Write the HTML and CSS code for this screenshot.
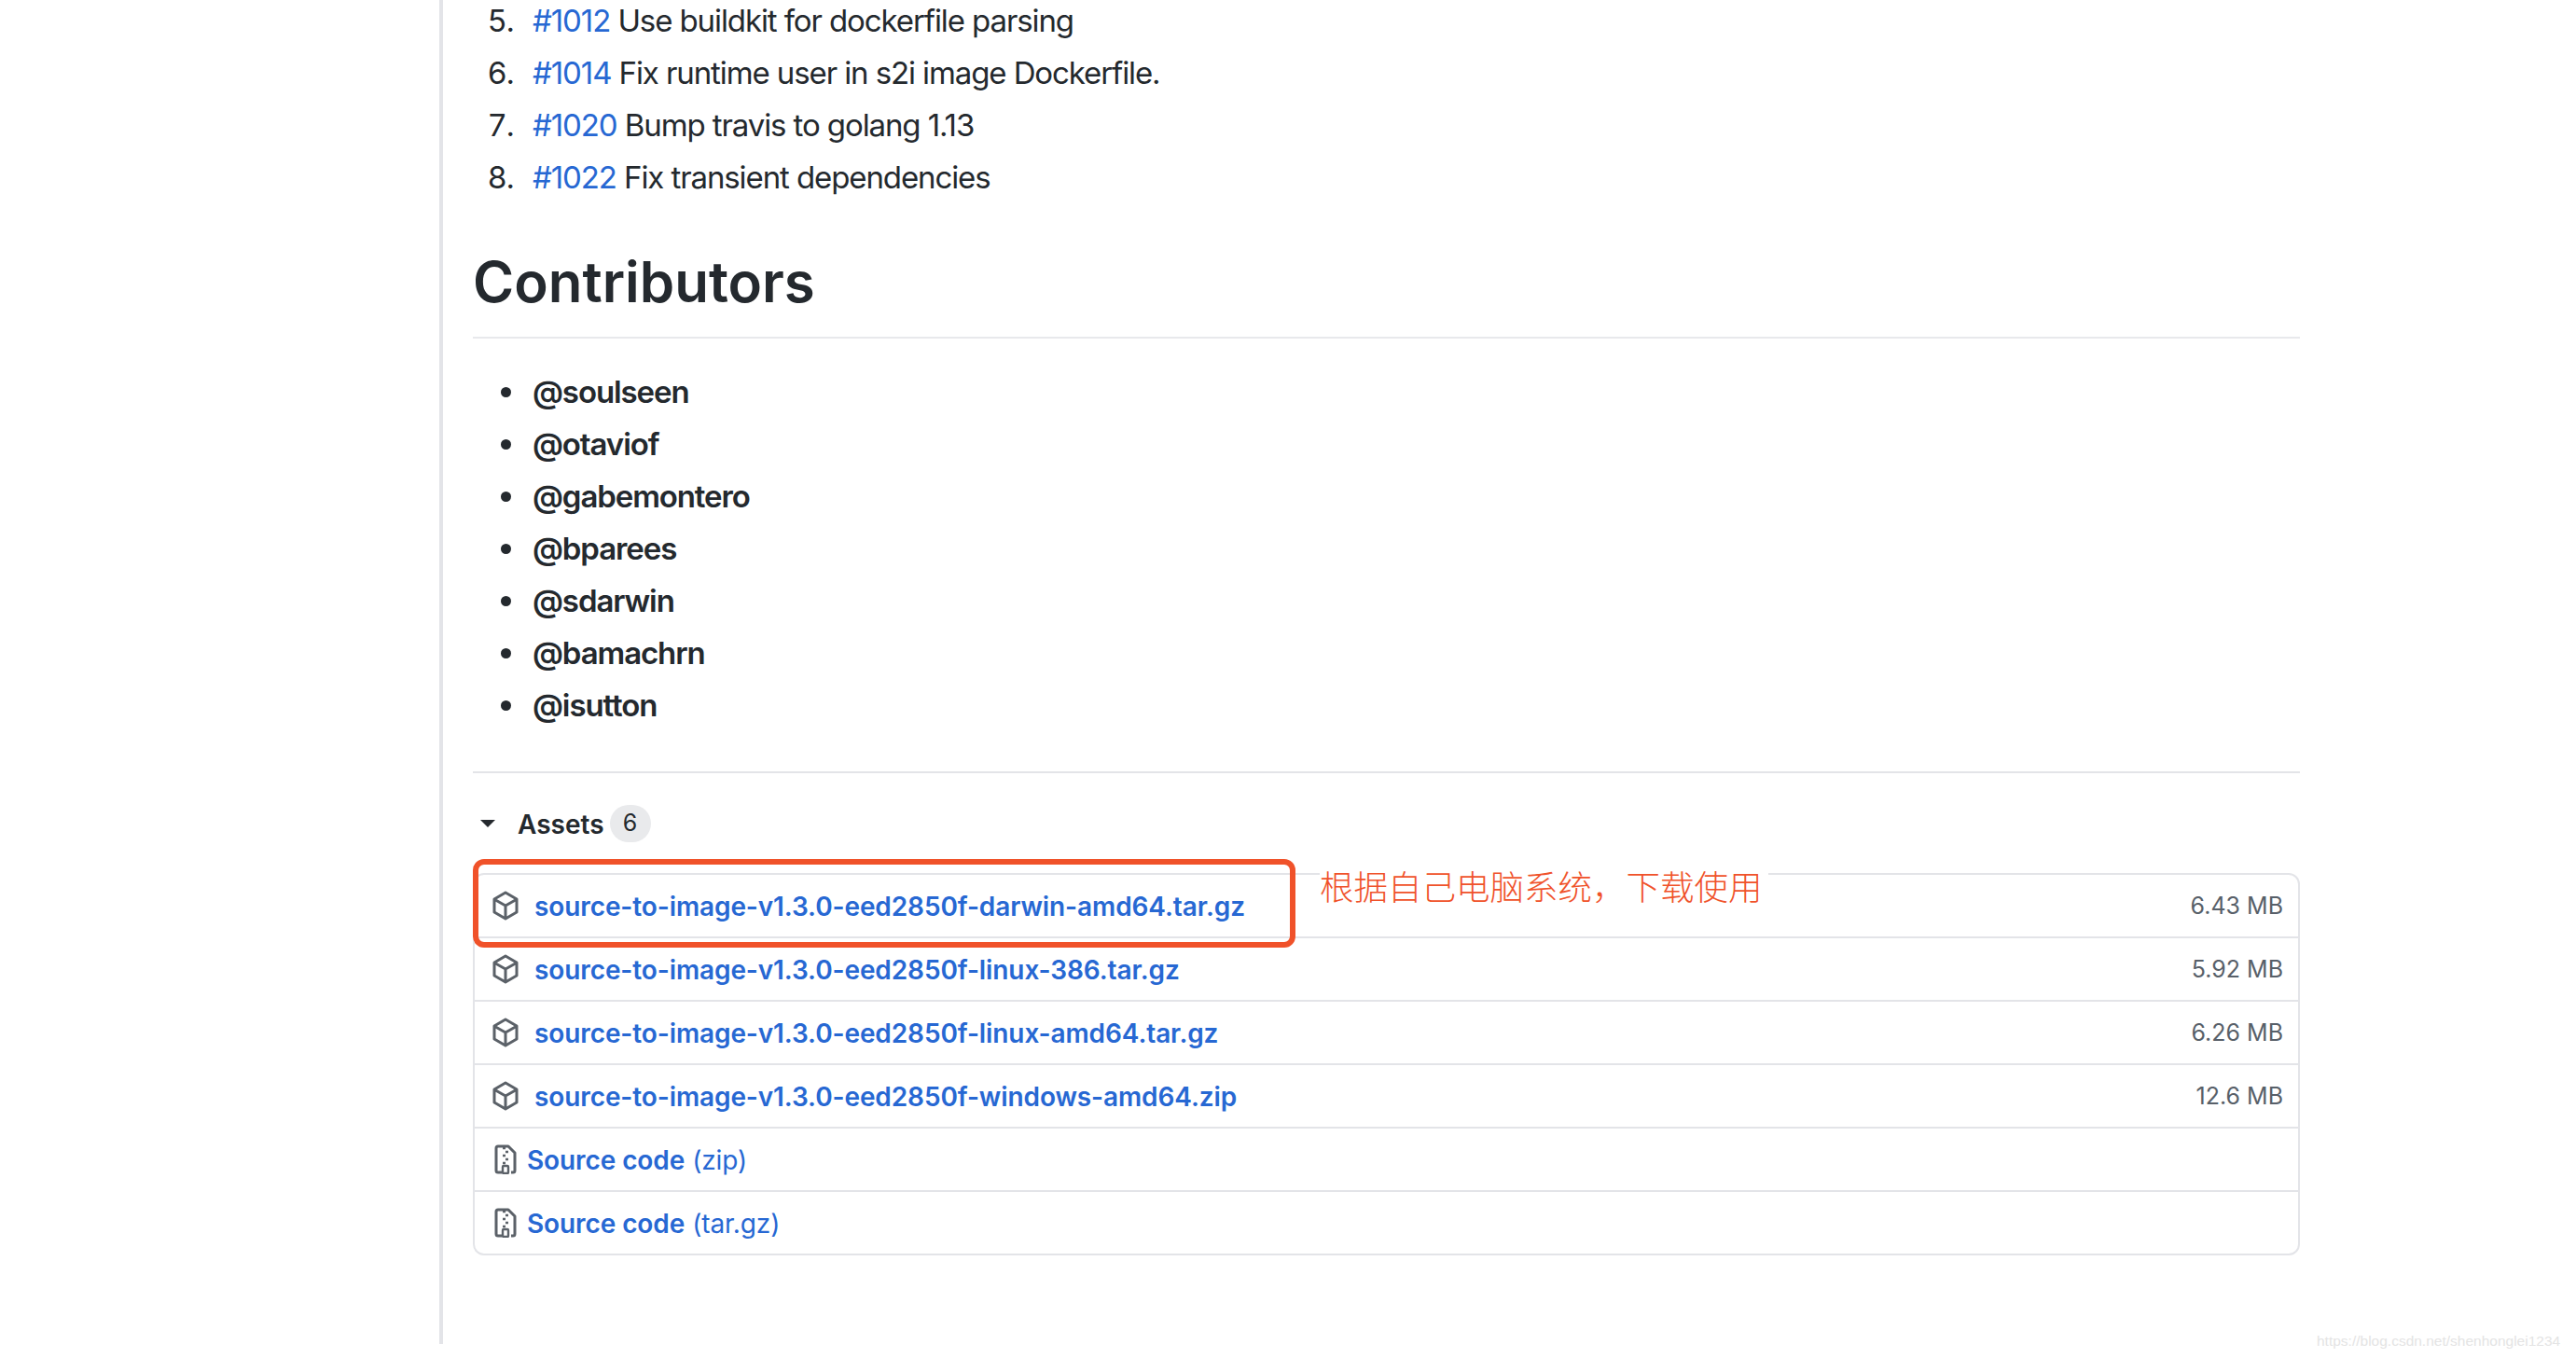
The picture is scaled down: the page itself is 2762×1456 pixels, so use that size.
FILE: index.html
```html
<!DOCTYPE html>
<html lang="en">
<head>
<meta charset="utf-8">
<title>Release assets</title>
<link rel="stylesheet" href="styles.css">
</head>
<body>
<svg class="defs" width="0" height="0" aria-hidden="true">
  <defs>
    <symbol id="pkg" viewBox="0 0 28 32">
      <path d="M14 2 L26 9 V23 L14 30 L2 23 V9 Z M2.5 9.5 L14 16 L25.5 9.5 M14 16 V29.5" fill="none" stroke="currentColor" stroke-width="3" stroke-linejoin="round"/>
    </symbol>
    <symbol id="zip" viewBox="0 0 24 32">
      <path d="M8 30 H4 Q2 30 2 28 V4 Q2 2 4 2 H15 L22 9 V28 Q22 30 20 30 H18" fill="none" stroke="currentColor" stroke-width="3" stroke-linejoin="round"/>
      <path d="M9 4 h3 M12 8 h3 M9 12 h3 M12 16 h3 M9 20 h3" fill="none" stroke="currentColor" stroke-width="2.4"/>
      <rect x="9" y="23" width="6" height="8" rx="1" fill="none" stroke="currentColor" stroke-width="2.4"/>
    </symbol>
  </defs>
</svg>
<main class="page">
  <ol class="changes" start="5">
    <li><a href="#">#1012</a> Use buildkit for dockerfile parsing</li>
    <li><a href="#">#1014</a> Fix runtime user in s2i image Dockerfile.</li>
    <li><a href="#">#1020</a> Bump travis to golang 1.13</li>
    <li><a href="#">#1022</a> Fix transient dependencies</li>
  </ol>
  <h2 class="heading">Contributors</h2>
  <ul class="people">
    <li>@soulseen</li>
    <li>@otaviof</li>
    <li>@gabemontero</li>
    <li>@bparees</li>
    <li>@sdarwin</li>
    <li>@bamachrn</li>
    <li>@isutton</li>
  </ul>
  <div class="assets-head">
    <span class="caret"></span>
    <span class="assets-title">Assets</span>
    <span class="badge">6</span>
  </div>
  <div class="assets">
    <div class="row"><svg class="ico-pkg"><use href="#pkg"/></svg><a class="file" href="#">source-to-image-v1.3.0-eed2850f-darwin-amd64.tar.gz</a><span class="size">6.43 MB</span></div>
    <div class="row"><svg class="ico-pkg"><use href="#pkg"/></svg><a class="file" href="#">source-to-image-v1.3.0-eed2850f-linux-386.tar.gz</a><span class="size">5.92 MB</span></div>
    <div class="row"><svg class="ico-pkg"><use href="#pkg"/></svg><a class="file" href="#">source-to-image-v1.3.0-eed2850f-linux-amd64.tar.gz</a><span class="size">6.26 MB</span></div>
    <div class="row"><svg class="ico-pkg"><use href="#pkg"/></svg><a class="file" href="#">source-to-image-v1.3.0-eed2850f-windows-amd64.zip</a><span class="size">12.6 MB</span></div>
    <div class="row"><svg class="ico-zip"><use href="#zip"/></svg><a class="file source" href="#">Source code</a><a class="ext" href="#">(zip)</a></div>
    <div class="row"><svg class="ico-zip"><use href="#zip"/></svg><a class="file source" href="#">Source code</a><a class="ext" href="#">(tar.gz)</a></div>
    <div class="redbox"></div>
    <div class="note">根据自己电脑系统，下载使用</div>
  </div>
</main>
<div class="mark">https://blog.csdn.net/shenhonglei1234</div>
</body>
</html>
```

FILE: styles.css
```css
html, body {
  margin: 0;
  height: 1456px;
  overflow: hidden;
  background: #fff;
}
body {
  font-family: Inter, "Noto Sans CJK SC", sans-serif;
  color: #24292e;
  position: relative;
}
.defs { position: absolute; }
a { color: #2768d3; text-decoration: none; }
.page {
  display: flow-root;
  margin-left: 471px;
  width: 1995px;
  height: 1441px;
  box-sizing: border-box;
  border-left: 4px solid #e3e4e8;
  padding-left: 32px;
}
.changes, .people {
  margin: 0;
  padding: 0 0 0 64px;
  font-size: 33px;
  line-height: 56px;
  letter-spacing: -1.1px;
}
.changes { margin-top: -6px; }
.changes li::marker { content: counter(list-item) ".\00a0\00a0\2009"; }
.heading {
  margin: 49px 0 0;
  font-size: 60px;
  line-height: 70px;
  font-weight: 600;
  padding-bottom: 24px;
  border-bottom: 2px solid #e8e9ec;
}
.people {
  list-style: none;
  margin-top: 29px;
  font-weight: 600;
  padding-bottom: 43px;
  border-bottom: 2px solid #e3e4e8;
}
.people li { position: relative; }
.people li::before {
  content: "";
  position: absolute;
  left: -34px;
  top: 23px;
  width: 11px;
  height: 11px;
  border-radius: 50%;
  background: #24292e;
}
.assets-head {
  display: flex;
  align-items: center;
  height: 40px;
  margin-top: 34px;
  padding-left: 8px;
}
.caret {
  width: 0;
  height: 0;
  border-left: 8px solid transparent;
  border-right: 8px solid transparent;
  border-top: 8px solid #24292e;
}
.assets-title {
  margin-left: 24px;
  padding-top: 1px;
  font-size: 28px;
  font-weight: 600;
}
.badge {
  margin-left: 6px;
  width: 44px;
  height: 40px;
  border-radius: 20px;
  background: #e9eaec;
  font-size: 25px;
  line-height: 38px;
  text-align: center;
}
.assets {
  position: relative;
  margin-top: 33px;
  width: 1959px;
  box-sizing: border-box;
  border: 2px solid #e3e4e8;
  border-radius: 12px;
}
.row {
  display: flex;
  align-items: center;
  height: 68px;
  box-sizing: border-box;
  padding: 0 16px 0 19px;
  font-size: 28px;
  border-top: 2px solid #e3e4e8;
}
.row:first-child { border-top: 0; height: 66px; }
.ico-pkg { width: 28px; height: 32px; color: #5b6168; flex: none; }
.ico-zip { width: 24px; height: 32px; color: #5b6168; flex: none; margin-left: 2px; }
.file { font-weight: 600; margin: 2px 0 0 17px; letter-spacing: -0.1px; }
.source { margin-left: 11px; }
.ext { margin: 2px 0 0 8px; letter-spacing: -0.1px; }
.size { margin-left: auto; color: #586069; font-size: 25px; }
.redbox {
  position: absolute;
  left: -2px;
  top: -17px;
  width: 882px;
  height: 95px;
  box-sizing: border-box;
  border: 6px solid #f0522a;
  border-radius: 12px;
}
.note {
  position: absolute;
  left: 906px;
  top: -12px;
  font-family: "Noto Sans CJK SC", sans-serif;
  font-weight: 300;
  font-size: 36.5px;
  line-height: 48px;
  white-space: nowrap;
  color: #f0522a;
  background: #fff;
  padding-right: 6px;
}
.mark {
  position: absolute;
  left: 2484px;
  top: 1429px;
  font-family: "Liberation Sans", sans-serif;
  font-size: 15.5px;
  line-height: 18px;
  color: #e4e4e4;
  white-space: nowrap;
}
```
